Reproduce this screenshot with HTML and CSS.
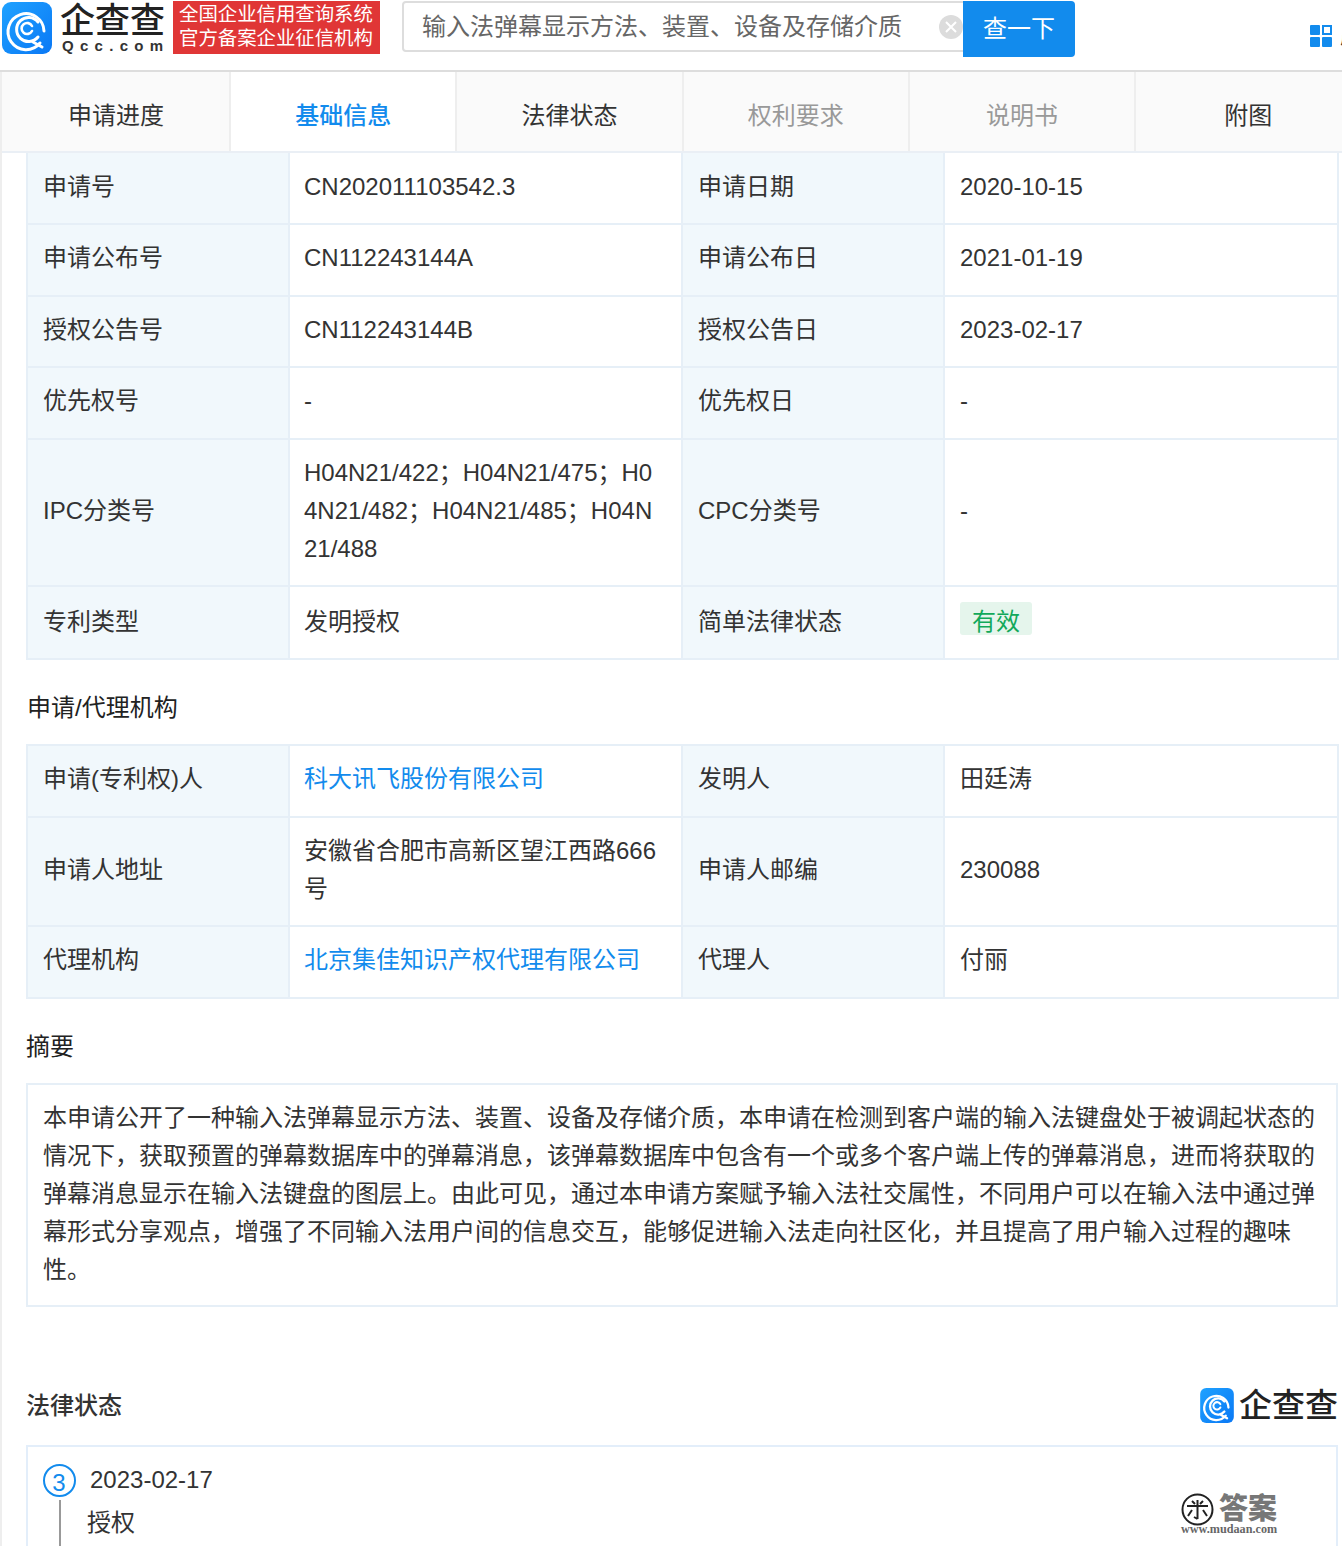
FILE: index.html
```html
<!DOCTYPE html>
<html lang="zh-CN">
<head>
    <meta charset="UTF-8">
    <title>输入法弹幕显示方法、装置、设备及存储介质</title>
    <link rel="stylesheet" href="styles.css">
</head>
<body>

    <!-- Top bar -->
    <header class="topbar">
        <svg class="logo-mark" width="50" height="52" viewBox="0 0 50 52">
            <defs>
                <linearGradient id="logoBlue" x1="0" y1="0" x2="1" y2="1">
                    <stop offset="0" stop-color="#1fa2ff"/>
                    <stop offset="1" stop-color="#0a78f5"/>
                </linearGradient>
            </defs>
            <rect width="50" height="52" rx="9" fill="url(#logoBlue)"/>
            <g fill="none" stroke="#fff" stroke-linecap="round">
                <path d="M38 41 A18 18 0 1 1 42 29" stroke-width="3"/>
                <path d="M36 35 A12 12 0 1 1 36 20" stroke-width="3"/>
                <path d="M30 29 A5.5 5.5 0 1 1 30 24" stroke-width="2.6"/>
                <path d="M31 40 L40 45" stroke-width="3"/>
            </g>
        </svg>
        <div class="logo-text">
            <div class="logo-name">企查查</div>
            <div class="logo-domain">Qcc.com</div>
        </div>
        <div class="badge">
            <div>全国企业信用查询系统</div>
            <div>官方备案企业征信机构</div>
        </div>
        <div class="search-box">
            <span class="search-text">输入法弹幕显示方法、装置、设备及存储介质</span>
            <svg class="search-clear" width="24" height="24" viewBox="0 0 24 24">
                <circle cx="12" cy="12" r="12" fill="#dcdcdc"/>
                <path d="M7 7 L17 17 M17 7 L7 17" stroke="#fff" stroke-width="2"/>
            </svg>
        </div>
        <button class="search-btn">查一下</button>
        <svg class="apps-icon" width="22" height="22" viewBox="0 0 22 22">
            <rect width="10" height="10" rx="1" fill="#128bed"/>
            <rect x="13" y="1" width="8" height="8" fill="#fff" stroke="#128bed" stroke-width="2"/>
            <rect y="12" width="10" height="10" rx="1" fill="#128bed"/>
            <rect x="12" y="12" width="10" height="10" rx="1" fill="#128bed"/>
        </svg>
        <span class="apps-label">应用</span>
    </header>

    <div class="page">
        <nav class="tabs">
            <div class="tab">申请进度</div>
            <div class="tab active">基础信息</div>
            <div class="tab">法律状态</div>
            <div class="tab muted">权利要求</div>
            <div class="tab muted">说明书</div>
            <div class="tab">附图</div>
        </nav>

        <main class="content">
            <table class="info-table no-top">
                <colgroup>
                    <col class="col-a"><col class="col-b"><col class="col-c"><col class="col-d">
                </colgroup>
                <tr>
                    <td class="label">申请号</td><td>CN202011103542.3</td>
                    <td class="label">申请日期</td><td>2020-10-15</td>
                </tr>
                <tr>
                    <td class="label">申请公布号</td><td>CN112243144A</td>
                    <td class="label">申请公布日</td><td>2021-01-19</td>
                </tr>
                <tr>
                    <td class="label">授权公告号</td><td>CN112243144B</td>
                    <td class="label">授权公告日</td><td>2023-02-17</td>
                </tr>
                <tr>
                    <td class="label">优先权号</td><td>-</td>
                    <td class="label">优先权日</td><td>-</td>
                </tr>
                <tr>
                    <td class="label">IPC分类号</td>
                    <td class="break-all">H04N21/422；H04N21/475；H04N21/482；H04N21/485；H04N21/488</td>
                    <td class="label">CPC分类号</td><td>-</td>
                </tr>
                <tr class="tag-row">
                    <td class="label">专利类型</td><td>发明授权</td>
                    <td class="label">简单法律状态</td><td class="tag-cell"><span class="tag-green">有效</span></td>
                </tr>
            </table>

            <h3 class="section-title">申请/代理机构</h3>
            <table class="info-table">
                <colgroup>
                    <col class="col-a"><col class="col-b"><col class="col-c"><col class="col-d">
                </colgroup>
                <tr>
                    <td class="label">申请(专利权)人</td><td><a class="link">科大讯飞股份有限公司</a></td>
                    <td class="label">发明人</td><td>田廷涛</td>
                </tr>
                <tr>
                    <td class="label">申请人地址</td><td>安徽省合肥市高新区望江西路666号</td>
                    <td class="label">申请人邮编</td><td>230088</td>
                </tr>
                <tr>
                    <td class="label">代理机构</td><td><a class="link">北京集佳知识产权代理有限公司</a></td>
                    <td class="label">代理人</td><td>付丽</td>
                </tr>
            </table>

            <h3 class="section-title second">摘要</h3>
            <div class="abstract">本申请公开了一种输入法弹幕显示方法、装置、设备及存储介质，本申请在检测到客户端的输入法键盘处于被调起状态的情况下，获取预置的弹幕数据库中的弹幕消息，该弹幕数据库中包含有一个或多个客户端上传的弹幕消息，进而将获取的弹幕消息显示在输入法键盘的图层上。由此可见，通过本申请方案赋予输入法社交属性，不同用户可以在输入法中通过弹幕形式分享观点，增强了不同输入法用户间的信息交互，能够促进输入法走向社区化，并且提高了用户输入过程的趣味性。</div>

            <div class="legal-head">
                <h3 class="legal-title">法律状态</h3>
                <div class="brand">
                    <svg width="36" height="35" viewBox="0 0 50 52">
                        <rect width="50" height="52" rx="9" fill="url(#logoBlue)"/>
                        <g fill="none" stroke="#fff" stroke-linecap="round">
                            <path d="M38 41 A18 18 0 1 1 42 29" stroke-width="3.4"/>
                            <path d="M36 35 A12 12 0 1 1 36 20" stroke-width="3.4"/>
                            <path d="M30 29 A5.5 5.5 0 1 1 30 24" stroke-width="3"/>
                            <path d="M31 40 L40 45" stroke-width="3.4"/>
                        </g>
                    </svg>
                    <span class="brand-name">企查查</span>
                </div>
            </div>

            <div class="legal-box">
                <div class="step">
                    <div class="step-rail">
                        <span class="step-num">3</span>
                        <span class="step-line"></span>
                    </div>
                    <div class="step-body">
                        <div class="step-date">2023-02-17</div>
                        <div class="step-text">授权</div>
                    </div>
                </div>

                <!-- site stamp over the corner of the box -->
                <div class="stamp">
                    <div class="stamp-top">
                        <svg width="33" height="33" viewBox="0 0 33 33">
                            <circle cx="16.5" cy="16.5" r="15" fill="none" stroke="#222" stroke-width="2"/>
                            <path d="M6 13 H27 M16.5 7 V26 M16.5 26 L13 24 M11 17 L7 23 M22 17 L26 23 M11 8 L14 11 M22 8 L19 11" fill="none" stroke="#222" stroke-width="2"/>
                        </svg>
                        <span class="stamp-name">答案</span>
                    </div>
                    <div class="stamp-url">www.mudaan.com</div>
                </div>
            </div>
        </main>
    </div>

</body>
</html>
```

FILE: styles.css
```css
html, body {
    margin: 0;
    height: 1546px;
    overflow: hidden;
}

body {
    font-family: "Liberation Sans", "Noto Sans CJK SC", sans-serif;
    font-size: 24px;
    line-height: 38px;
    color: #333;
    background: #fff;
}

/* Top bar */
.topbar {
    display: flex;
    align-items: flex-start;
    height: 70px;
    border-bottom: 2px solid #ddd;
    box-sizing: content-box;
    overflow: hidden;
    white-space: nowrap;
}

.logo-mark {
    flex: none;
    margin: 2px 0 0 2px;
}

.logo-text {
    flex: none;
    width: 105px;
    margin: 0 8px 0 8px;
}

.logo-name {
    padding-top: 3px;
    font-size: 35px;
    line-height: 36px;
    font-weight: 500;
    color: #222;
}

.logo-domain {
    font-size: 15px;
    line-height: 14px;
    font-weight: 700;
    letter-spacing: 6.3px;
    padding-left: 2px;
    color: #333;
}

.badge {
    flex: none;
    box-sizing: border-box;
    width: 207px;
    height: 53px;
    margin-top: 1px;
    padding: 1px 0 0 6px;
    background: #e03636;
    color: #fff;
    font-size: 19.4px;
    line-height: 24px;
    white-space: nowrap;
}

.search-box {
    flex: none;
    display: flex;
    align-items: center;
    justify-content: space-between;
    box-sizing: border-box;
    width: 565px;
    height: 51px;
    margin: 1px 0 0 22px;
    padding: 0 2px 0 18px;
    border: 2px solid #ddd;
    border-radius: 4px 0 0 4px;
}

.search-text {
    font-size: 24px;
    color: #666;
}

.search-clear {
    flex: none;
}

.search-btn {
    flex: none;
    width: 112px;
    height: 56px;
    margin: 1px 0 0 -4px;
    padding: 0 0 5px;
    border: none;
    border-radius: 0 4px 4px 0;
    background: #128bed;
    color: #fff;
    font-family: inherit;
    font-size: 24px;
    position: relative;
}

.apps-icon {
    flex: none;
    margin: 25px 0 0 235px;
}

.apps-label {
    flex: none;
    margin: 17px 0 0 8px;
    font-size: 22px;
}

/* Tabs */
.page {
    height: 1474px;
    border-left: 2px solid #eee;
}

.tabs {
    display: flex;
    height: 79px;
    border-bottom: 2px solid #eaeff5;
    overflow: hidden;
}

.tab {
    flex: none;
    width: 226.3px;
    text-align: center;
    line-height: 88px;
    background: #fafafa;
    border-right: 2px solid #eee;
    box-sizing: border-box;
}

.tab:first-child {
    width: 229px;
    padding-left: 1px;
}

.tab.active {
    background: #fff;
    color: #128bed;
    font-weight: 500;
}

.tab.muted {
    color: #999;
}

/* Content */
.content {
    padding: 0 4px 0 24px;
}

.info-table {
    width: 1311px;
    table-layout: fixed;
    border-collapse: collapse;
}

.col-a {
    width: 262px;
}

.col-b {
    width: 393px;
}

.col-c {
    width: 262px;
}

.col-d {
    width: 394px;
}

.info-table td {
    padding: 13.75px 24px 17.75px 14px;
    border: 2px solid #e6eff7;
    vertical-align: middle;
}

.info-table td:last-child {
    padding-left: 15px;
}

.info-table.no-top tr:first-child td {
    border-top: none;
    padding-top: 14.5px;
}

.info-table td.label {
    padding-left: 15px;
    background: #f1f8fc;
}

.break-all {
    word-break: break-all;
}

.tag-row td {
    height: 38px;
    padding-top: 15.5px;
    padding-bottom: 17.5px;
}

.info-table td.tag-cell {
    vertical-align: top;
    padding-top: 15px;
    padding-bottom: 0;
}

.tag-green {
    display: block;
    width: max-content;
    height: 33px;
    padding: 0 12px;
    line-height: 39px;
    border-radius: 3px;
    background: #e5f5ec;
    color: #12a85a;
}

.link {
    color: #128bed;
}

.section-title {
    margin: 0;
    padding: 29px 0 17px 1px;
    font-size: 24px;
    line-height: 38px;
    font-weight: 400;
    color: #222;
}

.section-title.second {
    padding-left: 0;
}

.abstract {
    box-sizing: border-box;
    width: 1312px;
    height: 224px;
    padding: 14px 20px 14px 15px;
    border: 2px solid #e6eff7;
}

/* Legal status */
.legal-head {
    display: flex;
    align-items: center;
    justify-content: space-between;
    width: 1312px;
    margin-top: 80px;
    margin-bottom: 20px;
}

.legal-title {
    margin: 0;
    font-size: 24px;
    line-height: 38px;
    font-weight: 500;
}

.brand {
    display: flex;
    align-items: center;
    gap: 4px;
    height: 35px;
    margin: 1px 0 2px;
}

.brand-name {
    font-size: 33px;
    line-height: 35px;
    font-weight: 500;
    color: #222;
}

.legal-box {
    position: relative;
    box-sizing: border-box;
    width: 1312px;
    height: 200px;
    padding: 17px 15px;
    border: 2px solid #e3eefa;
}

.step {
    display: flex;
    gap: 15px;
}

.step-rail {
    display: flex;
    flex-direction: column;
    align-items: center;
    width: 32px;
}

.step-num {
    box-sizing: border-box;
    width: 33px;
    height: 33px;
    border: 2px solid #128bed;
    border-radius: 50%;
    color: #128bed;
    text-align: center;
    line-height: 33px;
}

.step-line {
    width: 2px;
    height: 60px;
    margin: 3px 0 0 1px;
    background: #999;
}

.step-date {
    line-height: 32px;
}

.step-text {
    margin-top: 11px;
    margin-left: -3px;
    line-height: 32px;
}

.stamp {
    position: absolute;
    top: 46px;
    right: 57px;
    width: 98px;
}

.stamp-top {
    display: flex;
    align-items: center;
    gap: 5px;
}

.stamp-name {
    font-size: 29px;
    line-height: 26px;
    font-weight: 900;
    color: #777;
}

.stamp-url {
    margin-top: -3px;
    font-family: "Liberation Serif", serif;
    font-size: 12.2px;
    line-height: 12px;
    font-weight: 700;
    color: #666;
    white-space: nowrap;
}
```
